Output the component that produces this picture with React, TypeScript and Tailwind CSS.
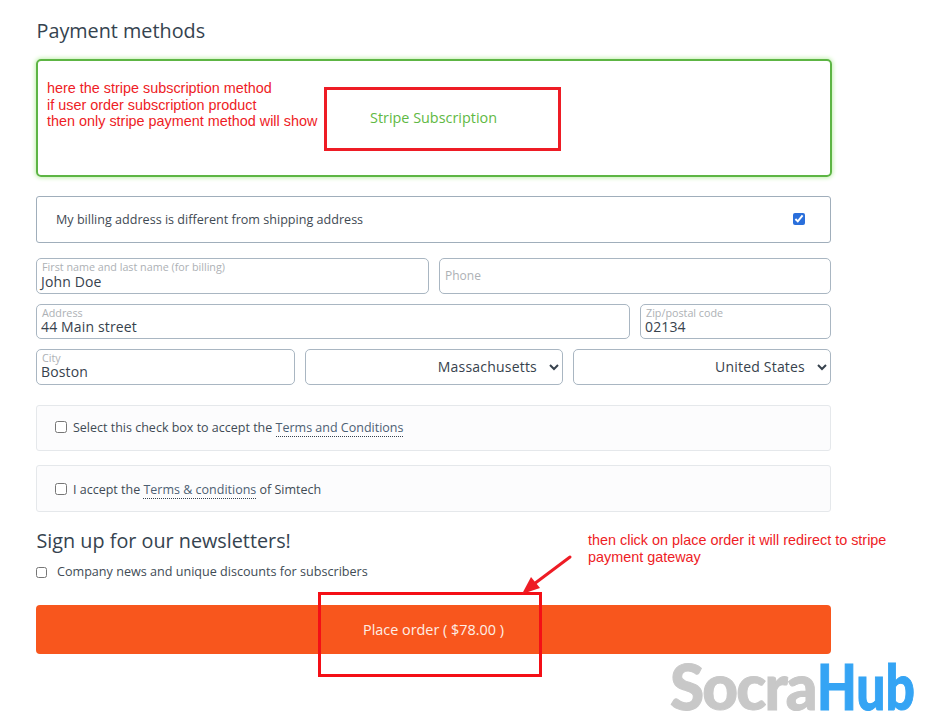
import React from "react";

const sans = "font-['Open_Sans',sans-serif]";
const red = "font-['Liberation_Sans',sans-serif] text-[#ee1c25] text-[14.4px] leading-[16.5px]";

function Field({ label, value, className, valueClass = "" }: { label: string; value?: string; className: string; valueClass?: string }) {
  return (
    <div className={`h-full rounded-[5px] border border-[#a9b6c2] bg-white pl-[4px] ${className}`}>
      {value ? (
        <div className="flex flex-col">
          <span className="pl-[1px] pt-[2px] text-[10.75px] leading-[12px] text-[#adb1b5]">{label}</span>
          <span className={`text-[14px] leading-[16px] tracking-[0.15px] text-[#37424d] ${valueClass}`}>{value}</span>
        </div>
      ) : (
        <span className="block pl-[1px] pt-[8px] text-[12px] leading-[17px] text-[#adb1b5]">{label}</span>
      )}
    </div>
  );
}

function Select({ value, className }: { value: string; className: string }) {
  return (
    <div className={`relative rounded-[5px] border border-[#a9b6c2] bg-white ${className}`}>
      <select
        defaultValue={value}
        className="h-full w-full appearance-auto bg-transparent pb-[2px] pr-[9px] text-[14px] tracking-[0.2px] text-[#37424d] [text-align-last:right]"
      >
        <option>{value}</option>
      </select>
    </div>
  );
}

export default function App() {
  return (
    <div className={`relative h-[714px] w-[935px] overflow-hidden bg-white ${sans}`}>
      <div className="ml-[36px] flex w-[795px] flex-col">
        <h2 className="ml-[0.5px] mt-[17px] text-[19.8px] leading-[27px] text-[#35434f]">Payment methods</h2>

        <div className="mt-[15px] flex h-[118px] w-[796px] items-start rounded-[5px] border-2 border-[#5db544] pl-[9px] shadow-[0_0_4px_1px_#c3f0b0]">
          <div className={`mt-[19px] w-[277px] shrink-0 ${red}`}>
            <div>here the stripe subscription method</div>
            <div>if user order subscription product</div>
            <div>then only stripe payment method will show</div>
          </div>
          <span className="ml-[46px] mt-[47px] text-[14.4px] leading-[20px] text-[#5fb944]">Stripe Subscription</span>
        </div>

        <div className="mt-[19px] flex h-[47px] items-center justify-between rounded-[3px] border border-[#a0aebb] pl-[19px] pr-[25px]">
          <span className="pt-[2px] text-[12.58px] text-[#3f4a54]">My billing address is different from shipping address</span>
          <input type="checkbox" defaultChecked className="mb-[1px] h-[12px] w-[12px] accent-[#2a6fdb]" />
        </div>

        <div className="mt-[15px] flex h-[36px] gap-[10px]">
          <Field className="w-[393px]" label="First name and last name (for billing)" value="John Doe" valueClass="pt-[1px]" />
          <Field className="w-[392px]" label="Phone" />
        </div>
        <div className="mt-[10px] flex h-[35px] gap-[10px]">
          <Field className="w-[594px]" label="Address" value="44 Main street" />
          <Field className="w-[191px]" label="Zip/postal code" value="02134" />
        </div>
        <div className="mt-[10px] flex h-[36px] gap-[10px]">
          <Field className="w-[259px]" label="City" value="Boston" />
          <Select className="w-[258px]" value="Massachusetts" />
          <Select className="w-[258px]" value="United States" />
        </div>

        <div className="mt-[20px] flex h-[46px] items-center rounded-[3px] border border-[#e5e8eb] bg-[#fcfcfd] pl-[18px] text-[12.5px] text-[#414b55]">
          <input type="checkbox" className="mb-[2px] mr-[6px] h-[12px] w-[12px]" />
          <span>
            Select this check box to accept the{" "}
            <a className="border-b border-dotted border-[#36424e] text-[#4d6073]">Terms and Conditions</a>
          </span>
        </div>
        <div className="mt-[14px] flex h-[47px] items-center rounded-[3px] border border-[#e5e8eb] bg-[#fcfcfd] pl-[18px] text-[12.5px] text-[#414b55]">
          <input type="checkbox" className="mr-[6px] h-[12px] w-[12px]" />
          <span className="pt-[4px]">
            I accept the <a className="border-b border-dotted border-[#36424e] text-[#4d6073]">Terms &amp; conditions</a> of Simtech
          </span>
        </div>

        <h2 className="ml-[0.5px] mt-[15px] text-[19.8px] leading-[27px] text-[#35434f]">Sign up for our newsletters!</h2>
        <div className="mt-[9px] flex h-[18px] items-center text-[12.6px] text-[#414b55]">
          <input type="checkbox" className="mr-[10px] h-[11px] w-[11px]" />
          <span>Company news and unique discounts for subscribers</span>
        </div>

        <button className="mt-[24px] flex h-[49px] items-center justify-center rounded-[4px] bg-[#f8561d] text-[14.4px] text-[#fdeee6]">
          Place order ( $78.00 )
        </button>
      </div>

      {/* Annotations drawn on top of the screenshot */}
      <div className="absolute left-[324px] top-[87px] h-[64px] w-[237px] border-[3px] border-[#ee1c25]" />
      <div className="absolute left-[318px] top-[592px] h-[85px] w-[224px] border-[3px] border-[#f40f16]" />
      <div className={`absolute left-[588px] top-[532px] w-[320px] ${red}`}>
        then click on place order it will redirect to stripe
        <br />
        payment gateway
      </div>
      <svg className="absolute left-[520px] top-[554px]" width="54" height="42" viewBox="0 0 54 42">
        <path d="M50 3 L14 30" stroke="#ee1c25" strokeWidth="3" fill="none" strokeLinecap="round" />
        <path d="M2 40 L11 23 L20 34 Z" fill="#ee1c25" />
      </svg>
      <div className="absolute left-[670px] top-[658px] flex whitespace-nowrap font-['Lato',sans-serif] text-[62px] font-black leading-[56px] [-webkit-text-stroke:1px_currentColor]">
        <span className="tracking-[-1.8px] text-[#c8c8c8]">Socra</span>
        <span className="ml-[1px] inline-block w-[98px] origin-left scale-x-[0.83] text-[#35a4f4]">Hub</span>
      </div>
    </div>
  );
}
